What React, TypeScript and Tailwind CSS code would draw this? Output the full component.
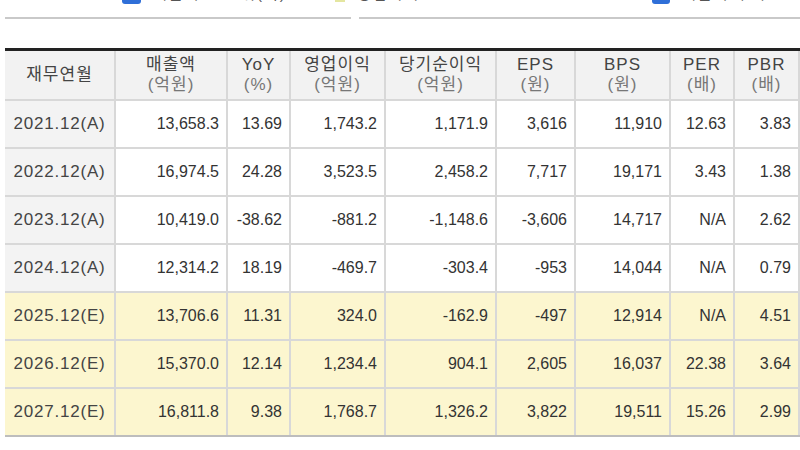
import React from "react";

const cols = [111, 112, 63, 95, 111, 79, 95, 64, 65];

const headers: [string, string | null][] = [
  ["재무연월", null],
  ["매출액", "(억원)"],
  ["YoY", "(%)"],
  ["영업이익", "(억원)"],
  ["당기순이익", "(억원)"],
  ["EPS", "(원)"],
  ["BPS", "(원)"],
  ["PER", "(배)"],
  ["PBR", "(배)"],
];

const rows: { label: string; est: boolean; values: string[] }[] = [
  { label: "2021.12(A)", est: false, values: ["13,658.3", "13.69", "1,743.2", "1,171.9", "3,616", "11,910", "12.63", "3.83"] },
  { label: "2022.12(A)", est: false, values: ["16,974.5", "24.28", "3,523.5", "2,458.2", "7,717", "19,171", "3.43", "1.38"] },
  { label: "2023.12(A)", est: false, values: ["10,419.0", "-38.62", "-881.2", "-1,148.6", "-3,606", "14,717", "N/A", "2.62"] },
  { label: "2024.12(A)", est: false, values: ["12,314.2", "18.19", "-469.7", "-303.4", "-953", "14,044", "N/A", "0.79"] },
  { label: "2025.12(E)", est: true, values: ["13,706.6", "11.31", "324.0", "-162.9", "-497", "12,914", "N/A", "4.51"] },
  { label: "2026.12(E)", est: true, values: ["15,370.0", "12.14", "1,234.4", "904.1", "2,605", "16,037", "22.38", "3.64"] },
  { label: "2027.12(E)", est: true, values: ["16,811.8", "9.38", "1,768.7", "1,326.2", "3,822", "19,511", "15.26", "2.99"] },
];

// legend rows of the two charts above, mostly scrolled out of view
function Legend({ items }: { items: { color: string; text: string; w: string }[] }) {
  return (
    <div className="flex items-start gap-3 h-[16px] -mt-[13px]">
      {items.map((it, i) => (
        <div key={i} className="flex items-start gap-3">
          <span className={`inline-block shrink-0 ${it.color}`} />
          <span className={`whitespace-nowrap text-[15px] leading-[13px] tracking-[2px] text-[#555] ${it.w}`}>{it.text}</span>
        </div>
      ))}
    </div>
  );
}

export default function App() {
  return (
    <div className="w-[800px] h-[450px] overflow-hidden bg-white font-['Liberation_Sans','Noto_Sans_CJK_KR',sans-serif] text-[#333]">
      <div className="flex">
        <div className="ml-[5px] w-[346px] h-[19px] border-b-2 border-[#c9c9c9] flex pl-[117px]">
          <Legend
            items={[
              { color: "w-[19px] h-[17px] rounded-[3px] bg-[#2f6fd8]", text: "매출액 ┘ 단위(억)", w: "w-[170px]" },
              { color: "w-[10px] h-[15px] bg-[#e4e6a0]", text: "영업이익", w: "w-[80px]" },
            ]}
          />
        </div>
        <div className="ml-[8px] flex-1 h-[19px] border-b-2 border-[#c9c9c9] flex pl-[293px]">
          <Legend items={[{ color: "w-[18px] h-[17px] rounded-[3px] bg-[#2f6fd8]", text: "매출액 추이", w: "w-[95px]" }]} />
        </div>
      </div>

      {/* 재무 요약 표 */}
      <div className="mt-[29px] ml-[5px] border-t-[3px] border-[#222]">
        <div className="flex h-[50px] border-b-2 border-[#d8d8d8] bg-[#f2f2f2]">
          {headers.map(([top, sub], i) => (
            <div
              key={i}
              style={{ width: cols[i] }}
              className="shrink-0 border-r-2 border-[#d8d8d8] flex flex-col items-center justify-center text-[17px] leading-[20px] tracking-[1px] text-[#444]"
            >
              <span>{top}</span>
              {sub && <span className="text-[#777]">{sub}</span>}
            </div>
          ))}
        </div>
        {rows.map((r, ri) => (
          <div
            key={ri}
            className={`flex h-[48px] border-b-2 ${ri === rows.length - 1 ? "border-[#bdbdbd]" : "border-[#d8d8d8]"} ${r.est ? "bg-[#fcf6cf]" : "bg-white"}`}
          >
            <div
              style={{ width: cols[0] }}
              className={`shrink-0 border-r-2 border-[#d8d8d8] flex items-center justify-center text-[17px] tracking-[0.8px] text-[#444] ${r.est ? "" : "bg-[#f3f3f3]"}`}
            >
              {r.label}
            </div>
            {r.values.map((v, vi) => (
              <div
                key={vi}
                style={{ width: cols[vi + 1] }}
                className="shrink-0 border-r-2 border-[#d8d8d8] flex items-center justify-end pr-[7px] text-[16px] text-[#333]"
              >
                {v}
              </div>
            ))}
          </div>
        ))}
      </div>
    </div>
  );
}
